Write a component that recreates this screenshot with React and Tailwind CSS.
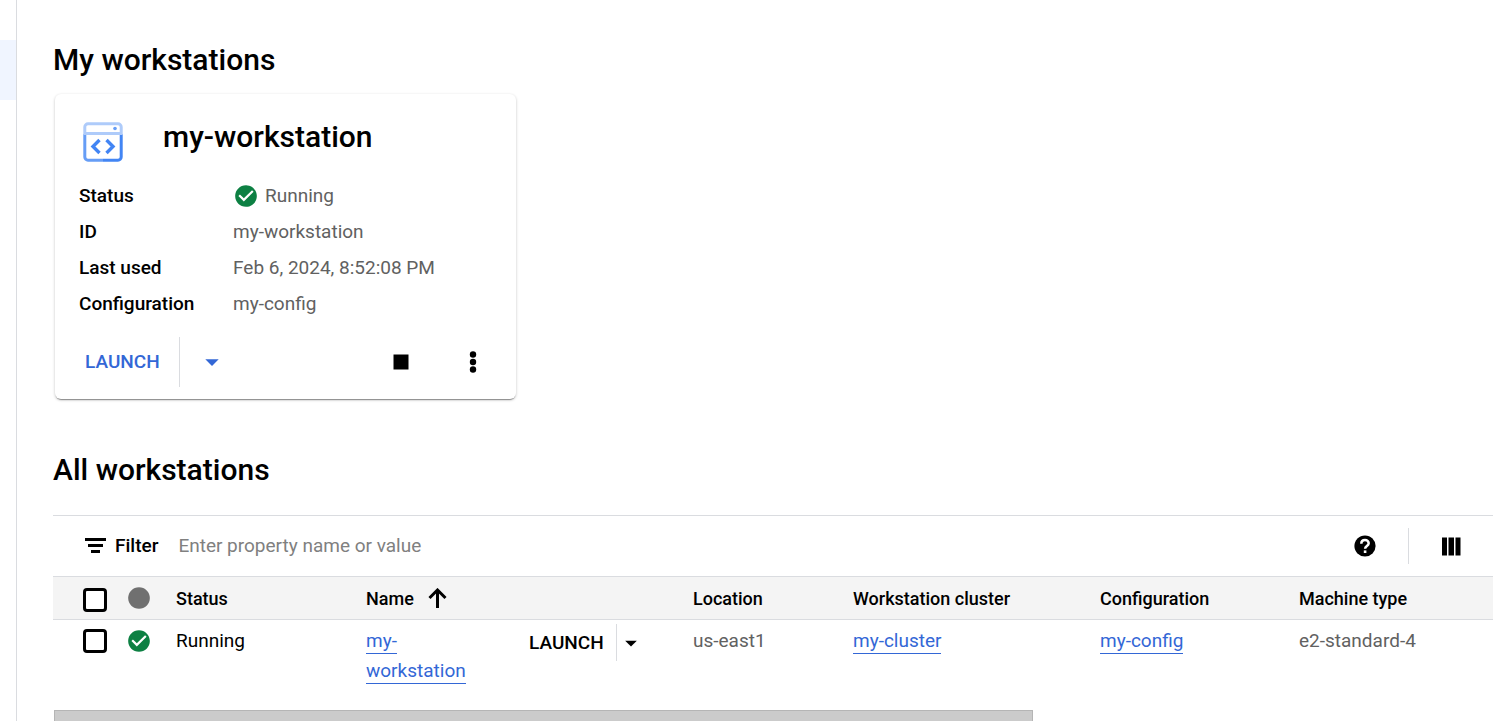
import { MdCheckCircle, MdCircle, MdArrowDropDown, MdStop } from "react-icons/md";

const details = [
  { label: "Status", value: "Running", ok: true },
  { label: "ID", value: "my-workstation" },
  { label: "Last used", value: "Feb 6, 2024, 8:52:08 PM" },
  { label: "Configuration", value: "my-config" },
];

const link = "border-b border-[#3367d6] pb-px text-[#3367d6]";
const checkbox =
  "block size-6 appearance-none rounded-sm border-3 border-black bg-white checked:bg-[#3367d6]";

function WorkstationIcon() {
  return (
    <svg viewBox="0 0 40 40" className="size-10" aria-hidden="true">
      <path d="M1.800 12v23a3.200 3.200 0 0 0 3.200 3.200H20" fill="none" stroke="#669df6" strokeWidth="3" />
      <path d="M20 38.200h15a3.200 3.200 0 0 0 3.200-3.200V12" fill="none" stroke="#4285f4" strokeWidth="3" />
      <path d="M1.800 13V5A3.200 3.200 0 0 1 5 1.800h30A3.200 3.200 0 0 1 38.200 5v8M1.800 11.500h36.400" fill="none" stroke="#aecbfa" strokeWidth="3" />
      <circle cx="32" cy="6.500" r="1.800" fill="#669df6" />
      <path d="M16.500 18l-6.500 6.500 6.500 6.500M23.500 18l6.500 6.500-6.500 6.500" fill="none" stroke="#4285f4" strokeWidth="3.400" />
    </svg>
  );
}

function ColumnsIcon() {
  return (
    <svg viewBox="0 0 19 19" className="size-[19px]" aria-hidden="true">
      <path d="M0 .5h5v18H0zM6.500 .5h5.500v18H6.500zM13.500 .5h5v18h-5z" />
    </svg>
  );
}

function HelpIcon() {
  return (
    <svg viewBox="0 0 22 22" className="size-[22px]" aria-hidden="true">
      <circle cx="11" cy="11" r="10.600" />
      <path d="M7.300 8.700C7.300 6.300 8.900 4.900 11 4.900s3.700 1.400 3.700 3.300c0 2.600-3.600 2.900-3.600 5.500" fill="none" stroke="#fff" strokeWidth="2.500" />
      <path d="M9.800 15.400h2.600V18H9.800z" fill="#fff" />
    </svg>
  );
}

function FilterIcon() {
  return (
    <svg viewBox="0 0 22 16" className="h-4 w-[22px]" aria-hidden="true">
      <path d="M0 0h21v3H0zM3 6h15v3H3zM6 12h9v3H6z" />
    </svg>
  );
}

function SortIcon() {
  return (
    <svg viewBox="0 0 20 20" className="size-5 shrink-0" aria-hidden="true">
      <path d="M9.500 20V2M1.500 10l8-8 8 8" fill="none" stroke="currentColor" strokeWidth="3" />
    </svg>
  );
}

function MoreIcon() {
  return (
    <svg viewBox="0 0 8 22" className="h-[22px] w-2" aria-hidden="true">
      <circle cx="4" cy="3.500" r="3.200" />
      <circle cx="4" cy="11" r="3.200" />
      <circle cx="4" cy="18.500" r="3.200" />
    </svg>
  );
}

function WorkstationCard() {
  return (
    <section className="mt-2 ml-0.5 w-full max-w-[461px] rounded-md bg-white px-6 pt-6 pb-3 shadow-[0_2px_1px_-1px_rgba(0,0,0,0.35),0_1px_3px_rgba(0,0,0,0.24)]">
      <div className="flex h-[60px] gap-10 pl-1">
        <div className="pt-1">
          <WorkstationIcon />
        </div>
        <h2 className="text-[30px] leading-[38px] font-medium">my-workstation</h2>
      </div>
      <dl className="grid grid-cols-[154px_1fr] text-[19px] leading-9">
        {details.map((d) => (
          <div key={d.label} className="contents">
            <dt className="font-medium">{d.label}</dt>
            <dd className="flex items-center gap-1.5 text-[#616161]">
              {d.ok && <MdCheckCircle className="size-[26px] text-[#0d8043]" />}
              {d.value}
            </dd>
          </div>
        ))}
      </dl>
      <div className="mt-[15px] flex h-[50px] items-center">
        <button type="button" className="h-full border-r border-[#dadce0] pr-[19px] pl-1.5 text-[19px] font-medium text-[#3367d6]">
          LAUNCH
        </button>
        <button type="button" aria-label="Launch options" className="ml-4 text-[#3367d6]">
          <MdArrowDropDown className="size-8" />
        </button>
        <button type="button" aria-label="Stop" className="mr-[53px] ml-auto">
          <MdStop className="size-[30px]" />
        </button>
        <button type="button" aria-label="More actions" className="mr-[15px]">
          <MoreIcon />
        </button>
      </div>
    </section>
  );
}

export default function App() {
  return (
    <div className="flex h-screen overflow-hidden bg-white font-[Roboto,sans-serif] text-black">
      <nav aria-label="Sections" className="w-[17px] shrink-0 border-r border-[#dadce0] pt-10">
        <div className="h-[60px] bg-[#f0f5ff]" />
      </nav>
      <main className="min-w-0 flex-1 pt-10 pr-[13px] pl-9">
        <h1 className="text-[30px] leading-10 font-medium">My workstations</h1>
        <div className="pt-1.5">
          <WorkstationCard />
        </div>
        <h1 className="mt-[51px] text-[30px] leading-10 font-medium">All workstations</h1>

        <div className="mt-[25px] flex h-[61px] items-center border-t border-[#dadce0] pl-8">
          <FilterIcon />
          <label htmlFor="filter" className="ml-2 text-[19px] font-medium">Filter</label>
          <input
            id="filter"
            placeholder="Enter property name or value"
            className="ml-5 min-w-0 flex-1 bg-transparent text-[19px] outline-none placeholder:text-[#808080]"
          />
          <button type="button" aria-label="Help">
            <HelpIcon />
          </button>
          <div className="ml-8 h-9 w-px bg-[#dadce0]" />
          <button type="button" aria-label="Column display options" className="mr-8 ml-[33px]">
            <ColumnsIcon />
          </button>
        </div>

        <table className="w-full table-fixed text-left text-[19px]">
          <colgroup>
            <col className="w-[72px]" />
            <col className="w-[51px]" />
            <col className="w-[190px]" />
            <col className="w-[163px]" />
            <col className="w-[164px]" />
            <col className="w-[160px]" />
            <col className="w-[247px]" />
            <col className="w-[199px]" />
            <col />
          </colgroup>
          <thead>
            <tr className="h-[43px] border-y border-[#dadce0] bg-[#f4f4f4] text-[18px] whitespace-nowrap [&>th]:font-medium">
              <th className="pt-1 pl-[30px]"><input type="checkbox" aria-label="Select all" className={checkbox} /></th>
              <th className="pl-px"><MdCircle className="size-[26px] text-[#707070]" aria-label="State" /></th>
              <th>Status</th>
              <th>
                <span className="flex items-center gap-3.5">Name <SortIcon /></span>
              </th>
              <th aria-label="Actions" />
              <th>Location</th>
              <th>Workstation cluster</th>
              <th>Configuration</th>
              <th>Machine type</th>
            </tr>
          </thead>
          <tbody>
            <tr className="align-top leading-[30px]">
              <td className="pt-[9px] pl-[30px]"><input type="checkbox" aria-label="Select my-workstation" className={checkbox} /></td>
              <td className="pt-2 pl-px"><MdCheckCircle className="size-[26px] text-[#0d8043]" /></td>
              <td className="pt-1.5">Running</td>
              <td className="pt-1.5 pr-14"><a href="#workstation" className={link}>my-workstation</a></td>
              <td className="pt-1">
                <div className="flex h-[37px] items-center">
                  <button type="button" className="h-full border-r border-[#dadce0] pr-3 font-medium">LAUNCH</button>
                  <button type="button" aria-label="Launch options"><MdArrowDropDown className="size-7" /></button>
                </div>
              </td>
              <td className="pt-1.5 text-[#616161]">us-east1</td>
              <td className="pt-1.5"><a href="#cluster" className={link}>my-cluster</a></td>
              <td className="pt-1.5"><a href="#config" className={link}>my-config</a></td>
              <td className="pt-1.5 text-[#616161]">e2-standard-4</td>
            </tr>
          </tbody>
        </table>
        <div className="mt-6 ml-px h-4 w-[68%] border border-[#b5b5b5] bg-[#cbcbcb]" />
      </main>
    </div>
  );
}
